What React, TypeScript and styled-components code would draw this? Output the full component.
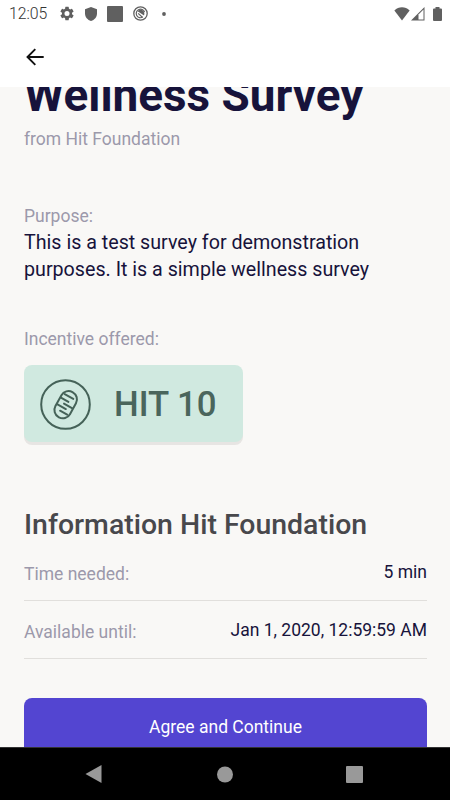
import React from 'react';
import styled, { createGlobalStyle } from 'styled-components';

const GlobalStyle = createGlobalStyle`
  * { box-sizing: border-box; }
  body { margin: 0; font-family: Roboto, sans-serif; }
  svg { display: block; flex: none; }
`;

const Screen = styled.div`
  width: 450px;
  height: 800px;
  display: flex;
  flex-direction: column;
  overflow: hidden;
  background: #f9f8f6;
`;

const StatusBar = styled.div`
  height: 27px;
  flex: none;
  background: #fff;
  display: flex;
  justify-content: space-between;
  align-items: center;
  padding: 0 8px 0 9px;
`;

const StatusGroup = styled.div<{ $gap: number }>`
  display: flex;
  align-items: center;
  gap: ${({ $gap }) => $gap}px;
`;

const Clock = styled.span`
  width: 40px;
  font-size: 15.8px;
  line-height: 20px;
  font-weight: 300;
  color: #333;
`;

const AppBar = styled.header`
  height: 60px;
  flex: none;
  background: #fff;
  display: flex;
  align-items: center;
  padding: 0 24px;
`;

const BackButton = styled.button`
  border: 0;
  padding: 0;
  background: none;
`;

const Content = styled.main`
  flex: 1;
  min-height: 0;
  overflow: hidden;
  padding: 0 24px;
`;

const Title = styled.h1`
  margin: -20px 0 0;
  font-size: 45.9px;
  line-height: 56px;
  font-weight: 700;
  color: #17133b;
  white-space: nowrap;
`;

const Label = styled.div`
  font-size: 17.5px;
  line-height: 22px;
  color: #9c99ab;
  white-space: nowrap;
`;

const Byline = styled(Label)`
  margin-top: 5px;
`;

const Field = styled.section<{ $top: number }>`
  margin-top: ${({ $top }) => $top}px;
`;

const Description = styled.p`
  margin: 2px 0 0;
  font-size: 19.68px;
  line-height: 27px;
  color: #17133b;
`;

const Incentive = styled.div`
  margin-top: 15px;
  width: 219px;
  height: 77px;
  border-radius: 8px;
  background: #d0e9e0;
  box-shadow: 0 3px 0 #e7e5e3;
  display: flex;
  align-items: center;
  gap: 23px;
  padding: 2px 0 0 16px;
`;

const Amount = styled.strong`
  margin-top: -2px;
  font-size: 34.8px;
  line-height: 42px;
  font-weight: 500;
  color: #4a655c;
  white-space: nowrap;
`;

const SectionTitle = styled.h2`
  margin: 66px 0 0;
  font-size: 28.45px;
  line-height: 34px;
  font-weight: 500;
  color: #48484c;
  white-space: nowrap;
`;

const InfoRow = styled.div<{ $height: number }>`
  height: ${({ $height }) => $height}px;
  display: flex;
  justify-content: space-between;
  align-items: flex-end;
  padding-bottom: 15px;
  border-bottom: 1px solid #e1dfdc;
  width: 403px;
`;

const Value = styled.div`
  padding-bottom: 2px;
  font-size: 17.5px;
  line-height: 22px;
  color: #17133b;
  white-space: nowrap;
`;

const AgreeButton = styled.button`
  display: block;
  width: 403px;
  height: 58px;
  margin-top: 39px;
  padding: 0;
  border: 0;
  border-radius: 8px;
  background: #5345d1;
  color: #fff;
  font-family: inherit;
  font-size: 17.5px;
  line-height: 22px;
`;

const NavBar = styled.nav`
  height: 53px;
  flex: none;
  background: #000;
  border-top: 1px solid #333;
  display: flex;
  justify-content: space-between;
  align-items: center;
  padding: 0 87px 0 85px;
`;

function GearIcon() {
  return (
    <svg width="14" height="15" viewBox="2 1.5 20 21" fill="#5f5f5f">
      <path d="M19.14 12.94c.04-.3.06-.61.06-.94s-.02-.64-.07-.94l2.03-1.58a.5.5 0 0 0 .12-.61l-1.92-3.32a.5.5 0 0 0-.59-.22l-2.39.96a7 7 0 0 0-1.62-.94l-.36-2.54A.48.48 0 0 0 13.92 2.4h-3.84a.48.48 0 0 0-.47.41l-.36 2.54c-.59.24-1.13.57-1.62.94l-2.39-.96a.48.48 0 0 0-.59.22L2.74 8.87a.48.48 0 0 0 .12.61l2.03 1.58a6 6 0 0 0 0 1.88l-2.03 1.58a.5.5 0 0 0-.12.61l1.92 3.32c.12.22.37.29.59.22l2.39-.96c.5.38 1.03.7 1.62.94l.36 2.54c.05.24.24.41.48.41h3.84c.24 0 .44-.17.47-.41l.36-2.54a7 7 0 0 0 1.62-.94l2.39.96c.22.08.47 0 .59-.22l1.92-3.32a.5.5 0 0 0-.12-.61zM12 15.6a3.6 3.6 0 1 1 0-7.2 3.6 3.6 0 0 1 0 7.2z" />
    </svg>
  );
}

function ShieldIcon() {
  return (
    <svg width="12" height="14" viewBox="0 0 12 14" fill="#606060">
      <path d="M6 0 12 2.3V6.5C12 10 9.5 13 6 14 2.5 13 0 10 0 6.5V2.3Z" />
    </svg>
  );
}

function SquareIcon() {
  return (
    <svg width="16" height="16" viewBox="0 0 16 16">
      <rect width="16" height="16" rx="1" fill="#606060" />
    </svg>
  );
}

function SyncIcon() {
  return (
    <svg width="15" height="15" viewBox="0 0 15 15" fill="none" stroke="#606060">
      <circle cx="7.5" cy="7.5" r="6.7" strokeWidth="1.3" />
      <path d="M9.8 11.1A4.3 4.3 0 1 1 11.6 6" strokeWidth="1.2" />
      <path d="M4.6 5.2C6 3.2 9 3.2 10.5 5.1c1 1.3 1.1 3 .5 4.3Z" fill="#606060" stroke="none" />
      <path d="m5.1 7.4 4.3 3.8" strokeWidth="1.2" />
    </svg>
  );
}

function TokenIcon() {
  return (
    <svg width="51" height="51" viewBox="0 0 51 51" fill="none" stroke="#456258" strokeWidth="2" strokeLinecap="round">
      <circle cx="25.5" cy="25.5" r="24.3" />
      <g transform="translate(25.7 25.7) rotate(29)">
        <rect x="-8.3" y="-14.3" width="16.6" height="28.6" rx="8.1" />
        <path d="M-6-8.8H3.8M-7.5-3.8H1M-2-.1H7.6M-7.8 3.7H2.2M-2 8H6.1" />
      </g>
    </svg>
  );
}

export default function App() {
  return (
    <Screen>
      <GlobalStyle />
      <StatusBar>
        <StatusGroup $gap={11}>
          <Clock>12:05</Clock>
          <GearIcon />
          <StatusGroup $gap={10}>
            <ShieldIcon />
            <SquareIcon />
            <SyncIcon />
          </StatusGroup>
          <svg width="12" height="4" viewBox="0 0 12 4"><circle cx="5" cy="2" r="1.9" fill="#606060" /></svg>
        </StatusGroup>
        <StatusGroup $gap={1}>
          <svg width="16" height="14" viewBox="0 0 17 14" preserveAspectRatio="none"><path d="M.4 3.5C5-.8 12-.8 16.6 3.5L8.5 13.5Z" fill="#606060" /></svg>
          <svg width="21" height="14" viewBox="0 0 21 14"><path d="M0 13.5 13.5 0V13.5Z" fill="#606060" /><path d="M7.5 7.5 12.5 2.5v10H7.5Z" fill="#fff" /></svg>
          <svg width="9" height="14" viewBox="0 0 9 14"><path d="M2.5 0h4v1.4H8q1 0 1 1V13q0 1-1 1H1q-1 0-1-1V2.4q0-1 1-1h1.5Z" fill="#606060" /></svg>
        </StatusGroup>
      </StatusBar>
      <AppBar>
        <BackButton aria-label="Back">
          <svg width="21" height="20" viewBox="0 0 21 20" fill="none" stroke="#111" strokeWidth="1.9"><path d="M19.7 10H4M11.3 2.2 3.5 10l7.8 7.8" /></svg>
        </BackButton>
      </AppBar>
      <Content>
        <Title>Wellness Survey</Title>
        <Byline>from Hit Foundation</Byline>
        <Field $top={55}>
          <Label>Purpose:</Label>
          <Description>This is a test survey for demonstration<br />purposes. It is a simple wellness survey</Description>
        </Field>
        <Field $top={45}>
          <Label>Incentive offered:</Label>
          <Incentive>
            <TokenIcon />
            <Amount>HIT 10</Amount>
          </Incentive>
        </Field>
        <SectionTitle>Information Hit Foundation</SectionTitle>
        <InfoRow $height={59}><Label>Time needed:</Label><Value>5 min</Value></InfoRow>
        <InfoRow $height={58}><Label>Available until:</Label><Value>Jan 1, 2020, 12:59:59 AM</Value></InfoRow>
        <AgreeButton>Agree and Continue</AgreeButton>
      </Content>
      <NavBar>
        <svg width="17" height="18" viewBox="0 0 17 18"><path d="M.5 9 16.5 0V18Z" fill="#999" /></svg>
        <svg width="17" height="17" viewBox="0 0 17 17"><circle cx="9" cy="8.5" r="8" fill="#999" /></svg>
        <svg width="17" height="17" viewBox="0 0 17 17"><rect width="17" height="17" rx="1" fill="#999" /></svg>
      </NavBar>
    </Screen>
  );
}
